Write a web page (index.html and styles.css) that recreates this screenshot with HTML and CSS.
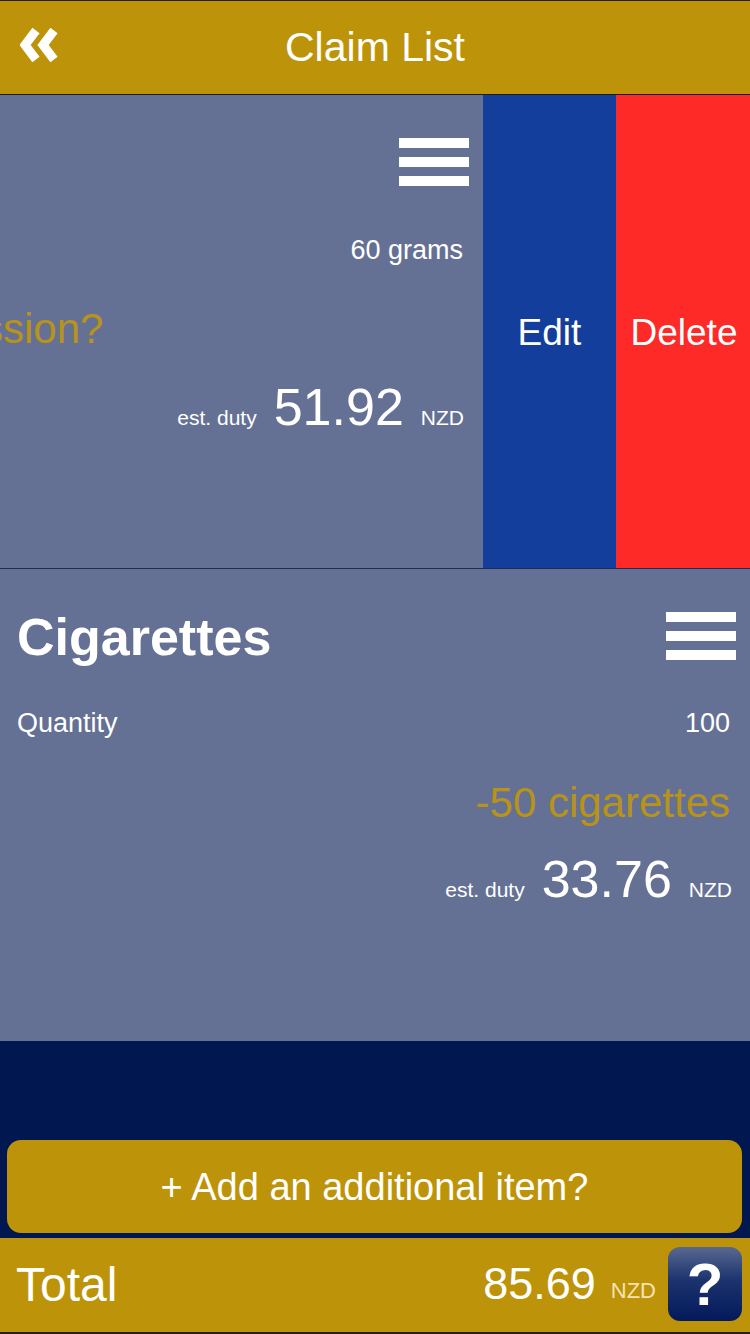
FILE: index.html
```html
<!DOCTYPE html>
<html lang="en">
<head>
<meta charset="utf-8">
<title>Claim List</title>
<link rel="stylesheet" href="styles.css">
</head>
<body>
<div class="app">
  <header class="header">
    <svg class="back" viewBox="0 0 40 36" aria-hidden="true"><path d="M16 3.5 L5 18 L16 32.5 M34 3.500 L23 18 L34 32.5"/></svg>
    <h1 class="title">Claim List</h1>
  </header>
  <section class="row swiped">
    <div class="row-content">
      <div class="line-menu">
        <span class="menu"><i></i><i></i><i></i></span>
      </div>
      <div class="line-qty"><span>60 grams</span></div>
      <div class="line-note"><span>ssion?</span></div>
      <div class="line-duty"><span class="est">est. duty</span><span class="amount">51.92</span><span class="cur">NZD</span></div>
    </div>
    <div class="action edit">Edit</div>
    <div class="action delete">Delete</div>
  </section>
  <section class="row">
    <div class="row-content">
      <div class="line-menu">
        <h2 class="item-name">Cigarettes</h2>
        <span class="menu"><i></i><i></i><i></i></span>
      </div>
      <div class="line-qty"><span>Quantity</span><span>100</span></div>
      <div class="line-note"><span>-50 cigarettes</span></div>
      <div class="line-duty"><span class="est">est. duty</span><span class="amount">33.76</span><span class="cur">NZD</span></div>
    </div>
  </section>
  <div class="spacer">
    <button class="add">+ Add an additional item?</button>
  </div>
  <footer class="footer">
    <span class="total-label">Total</span>
    <span class="total-amount">85.69</span>
    <span class="total-cur">NZD</span>
    <span class="help">?</span>
  </footer>
</div>
</body>
</html>
```
FILE: styles.css
```css
* { box-sizing: border-box; }
html, body { margin: 0; padding: 0; }
body { background: #fff; font-family: "Liberation Sans", Arial, sans-serif; color: #fff; }
.app { width: 750px; height: 1334px; display: flex; flex-direction: column; background: #00174f; overflow: hidden; }

.header { height: 95px; flex: none; background: #bd930a; border-top: 1px solid #2a2208; border-bottom: 1px solid #1b1c20; display: flex; align-items: center; justify-content: center; position: relative; }
.title { margin: 0; font-size: 41px; font-weight: 400; line-height: 1; }
.back { position: absolute; left: 20px; top: 26px; width: 40px; height: 36px; fill: none; stroke: #fff; stroke-width: 9; }

.row { height: 474px; flex: none; background: #657194; display: flex; overflow: hidden; border-bottom: 1px solid #1f2c60; }
.row + .row { height: 472px; border-bottom: 0; }
.row-content { flex: 1; min-width: 0; display: flex; flex-direction: column; padding: 0 20px 0 17px; }
.swiped .row-content { padding-left: 0; }
.line-menu { height: 128px; flex: none; display: flex; align-items: flex-start; justify-content: space-between; margin-right: -6px; padding-top: 43px; }
.swiped .line-menu { height: 129px; justify-content: flex-end; }
.item-name { margin: 0; font-size: 52px; font-weight: 700; line-height: 50px; }
.menu { display: flex; flex-direction: column; gap: 9px; width: 70px; margin-left: auto; }
.menu i { display: block; height: 10px; background: #fff; }
.line-qty { height: 52px; flex: none; display: flex; justify-content: space-between; align-items: center; font-size: 27px; line-height: 30px; }
.swiped .line-qty { justify-content: flex-end; }
.line-note { height: 78px; flex: none; margin-top: 22px; display: flex; justify-content: flex-end; align-items: center; font-size: 42px; color: #b8931a; padding-bottom: 14px; }
.swiped .line-note { margin-top: 21px; justify-content: flex-start; }
.swiped .line-note span { margin-left: -18px; }
.line-duty { display: flex; justify-content: flex-end; align-items: baseline; margin: -2px -2px 0 0; line-height: 64px; }
.swiped .line-duty { margin: 0 -1px 0 0; }
.est { font-size: 21px; margin-right: 17px; }
.amount { font-size: 52px; margin-right: 17px; }
.cur { font-size: 21px; }

.action { flex: none; display: flex; align-items: center; justify-content: center; font-size: 37px; padding-top: 3px; }
.edit { width: 133px; background: #143e9b; }
.delete { width: 134px; padding-left: 2px; background: #fe2a28; }

.spacer { flex: 1; display: flex; align-items: flex-end; padding: 0 8px 5px 7px; }
.add { width: 100%; height: 93px; border: 0; border-radius: 14px; background: #bd930a; color: #fff; font: 400 38px "Liberation Sans", Arial, sans-serif; padding: 1px 0 0; }

.footer { height: 96px; flex: none; background: #bd930a; display: flex; align-items: center; padding: 0 8px 2px 16px; border-bottom: 2px solid #23210e; }
.total-label { font-size: 48px; margin-right: auto; }
.total-amount { font-size: 45px; margin-right: 15px; }
.total-cur { font-size: 22px; color: #f5e3b0; margin-right: 12px; align-self: center; padding-top: 14px; }
.help { width: 74px; height: 74px; border-radius: 12px; background: linear-gradient(#58688f, #1c336f 45%, #03195a); color: #fff; font-size: 60px; font-weight: 700; display: flex; align-items: center; justify-content: center; }
```
